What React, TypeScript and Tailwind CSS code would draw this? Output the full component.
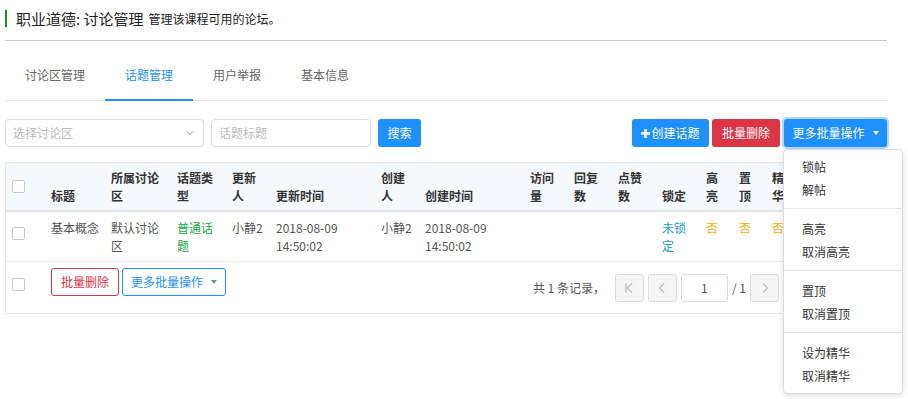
import React from "react";

const FONT = '"Noto Sans CJK SC", "Microsoft YaHei", sans-serif';

function Checkbox({ className = "" }: { className?: string }) {
  return <div className={"w-[13px] h-[13px] border border-[#c8c8c8] rounded-[2px] bg-white " + className} />;
}

function Caret({ color }: { color: string }) {
  return (
    <span
      className="inline-block w-0 h-0 ml-[8px] align-middle"
      style={{ borderLeft: "3.5px solid transparent", borderRight: "3.5px solid transparent", borderTop: `4px solid ${color}` }}
    />
  );
}

function PageBtn({ kind }: { kind: "first" | "prev" | "next" | "last" }) {
  return (
    <div className="w-[29px] h-[28px] border border-[#dcdcdc] rounded-[3px] bg-[#f5f5f5] flex items-center justify-center">
      <svg width="12" height="14" viewBox="0 0 12 14" fill="none" stroke="#bdbdbd" strokeWidth="1.2">
        {kind === "first" && (
          <>
            <path d="M3 2.5v9" />
            <path d="M9 2.5 4.2 7 9 11.5" />
          </>
        )}
        {kind === "prev" && <path d="M8 2.5 3.5 7 8 11.5" />}
        {kind === "next" && <path d="M4 2.5 8.5 7 4 11.5" />}
        {kind === "last" && (
          <>
            <path d="M3 2.5 7.8 7 3 11.5" />
            <path d="M9 2.5v9" />
          </>
        )}
      </svg>
    </div>
  );
}

function MenuItem({ children }: { children: React.ReactNode }) {
  return <div className="h-[23px] leading-[23px] pl-[18px]">{children}</div>;
}

function MenuDivider() {
  return <div className="mt-[7px] mb-[8px] h-px bg-[#e5e5e5]" />;
}

export default function App() {
  return (
    <div className="w-[908px] h-[399px] bg-white overflow-hidden text-[12px] text-[#333]" style={{ fontFamily: FONT }}>
      <div className="ml-[5px] w-[882px]">
        {/* header */}
        <div className="mt-[10px] flex items-center border-l-2 border-[#1e8c1e] pl-[9px] h-[17px]">
          <span className="text-[15px] leading-[17px] text-[#222]">职业道德: 讨论管理</span>
          <span className="ml-[5px] text-[12px] leading-[17px] text-[#222]">管理该课程可用的论坛。</span>
        </div>
        <div className="mt-[13px] h-px bg-[#cccccc]" />

        {/* tabs */}
        <div className="mt-[16px] flex border-b border-[#e8e8e8]">
          <div className="px-[20px] h-[43px] pt-[9px] leading-[18px] text-[#666]">讨论区管理</div>
          <div className="relative px-[20px] h-[43px] pt-[9px] leading-[18px] text-[#1e90ff]">
            话题管理
            <div className="absolute left-0 right-0 bottom-[-1px] h-[2px] bg-[#1e90ff]" />
          </div>
          <div className="px-[20px] h-[43px] pt-[9px] leading-[18px] text-[#666]">用户举报</div>
          <div className="px-[20px] h-[43px] pt-[9px] leading-[18px] text-[#666]">基本信息</div>
        </div>

        {/* filter row */}
        <div className="mt-[18px] flex justify-between h-[28px]">
          <div className="flex">
            <div className="w-[199px] h-[28px] border border-[#dcdcdc] rounded-[4px] flex items-center justify-between pl-[7px] pr-[9px]">
              <span className="text-[#bbb]">选择讨论区</span>
              <svg width="8" height="6" viewBox="0 0 8 6" fill="none" stroke="#888" strokeWidth="1">
                <path d="M1 1.5 4 4.5 7 1.5" />
              </svg>
            </div>
            <div className="ml-[7px] w-[160px] h-[28px] border border-[#dcdcdc] rounded-[4px] flex items-center pl-[7px]">
              <span className="text-[#bbb]">话题标题</span>
            </div>
            <div className="ml-[7px] w-[43px] h-[28px] rounded-[3px] bg-[#1e90ff] text-white flex items-center justify-center">搜索</div>
          </div>
          <div className="flex">
            <div className="w-[77px] h-[28px] rounded-[3px] bg-[#1e90ff] text-white flex items-center justify-center">
              <svg width="9" height="9" viewBox="0 0 9 9" className="mr-[1px]">
                <path d="M3.2 0h2.6v3.2H9v2.6H5.8V9H3.2V5.8H0V3.2h3.2z" fill="white" />
              </svg>
              创建话题
            </div>
            <div className="ml-[3px] w-[68px] h-[28px] rounded-[3px] bg-[#dc3545] text-white flex items-center justify-center">批量删除</div>
            <div className="relative ml-[4px]">
              <div className="w-[103px] h-[28px] rounded-[3px] bg-[#1e90ff] text-white flex items-center justify-center shadow-[0_0_0_2px_rgba(30,144,255,0.35)]">
                更多批量操作
                <Caret color="white" />
              </div>
              <div className="absolute left-[-1px] top-[30px] z-10 w-[120px] bg-white border border-[#dddddd] rounded-[4px] shadow-[0_2px_6px_rgba(0,0,0,0.12)] pt-[5px] pb-[6px] text-[#333]">
                <MenuItem>锁帖</MenuItem>
                <MenuItem>解帖</MenuItem>
                <MenuDivider />
                <MenuItem>高亮</MenuItem>
                <MenuItem>取消高亮</MenuItem>
                <MenuDivider />
                <MenuItem>置顶</MenuItem>
                <MenuItem>取消置顶</MenuItem>
                <MenuDivider />
                <MenuItem>设为精华</MenuItem>
                <MenuItem>取消精华</MenuItem>
              </div>
            </div>
          </div>
        </div>

        {/* table */}
        <div className="mt-[15px] border border-[#e6e6e6] leading-[18px]">
          {/* head */}
          <div className="flex bg-[#f6f9fc] h-[49px] border-b-2 border-[#e1e5e9] font-bold text-[#333]">
            <div className="w-[45px] shrink-0 pl-[6px] flex items-center"><Checkbox /></div>
            <div className="w-[60px] shrink-0 pr-[10px] flex items-end pb-[5px]">标题</div>
            <div className="w-[66px] shrink-0 pr-[10px] flex items-end pb-[5px]">所属讨论区</div>
            <div className="w-[55px] shrink-0 pr-[10px] flex items-end pb-[5px]">话题类型</div>
            <div className="w-[44px] shrink-0 pr-[10px] flex items-end pb-[5px]">更新人</div>
            <div className="w-[105px] shrink-0 pr-[10px] flex items-end pb-[5px]">更新时间</div>
            <div className="w-[44px] shrink-0 pr-[10px] flex items-end pb-[5px]">创建人</div>
            <div className="w-[105px] shrink-0 pr-[10px] flex items-end pb-[5px]">创建时间</div>
            <div className="w-[44px] shrink-0 pr-[10px] flex items-end pb-[5px]">访问量</div>
            <div className="w-[44px] shrink-0 pr-[10px] flex items-end pb-[5px]">回复数</div>
            <div className="w-[44px] shrink-0 pr-[10px] flex items-end pb-[5px]">点赞数</div>
            <div className="w-[44px] shrink-0 pr-[10px] flex items-end pb-[5px]">锁定</div>
            <div className="w-[33px] shrink-0 pr-[10px] flex items-end pb-[5px]">高亮</div>
            <div className="w-[33px] shrink-0 pr-[10px] flex items-end pb-[5px]">置顶</div>
            <div className="w-[33px] shrink-0 pr-[10px] flex items-end pb-[5px]">精华</div>
            <div className="flex-1" />
          </div>
          {/* row */}
          <div className="flex h-[50px] pt-[7px] border-b border-[#e9ecef] text-[#555]">
            <div className="w-[45px] shrink-0 pl-[6px]"><Checkbox className="mt-[8px]" /></div>
            <div className="w-[60px] shrink-0 pr-[10px]">基本概念</div>
            <div className="w-[66px] shrink-0 pr-[10px]">默认讨论区</div>
            <div className="w-[55px] shrink-0 pr-[10px] text-[#28a745]">普通话题</div>
            <div className="w-[44px] shrink-0 pr-[6px]">小静2</div>
            <div className="w-[105px] shrink-0 pr-[10px]">2018-08-09 14:50:02</div>
            <div className="w-[44px] shrink-0 pr-[6px]">小静2</div>
            <div className="w-[105px] shrink-0 pr-[10px]">2018-08-09 14:50:02</div>
            <div className="w-[44px] shrink-0 pr-[10px]" />
            <div className="w-[44px] shrink-0 pr-[10px]" />
            <div className="w-[44px] shrink-0 pr-[10px]" />
            <div className="w-[44px] shrink-0 pr-[10px] text-[#17a2b8]">未锁定</div>
            <div className="w-[33px] shrink-0 pr-[10px] text-[#f5b400]">否</div>
            <div className="w-[33px] shrink-0 pr-[10px] text-[#f5b400]">否</div>
            <div className="w-[33px] shrink-0 pr-[10px] text-[#f5b400]">否</div>
            <div className="flex-1" />
          </div>
          {/* footer */}
          <div className="flex h-[51px]">
            <div className="w-[45px] shrink-0 pl-[6px] pt-[16px]"><Checkbox /></div>
            <div className="pt-[6px] flex items-start">
              <div className="w-[68px] h-[28px] border border-[#dc3545] rounded-[3px] text-[#dc3545] flex items-center justify-center">批量删除</div>
              <div className="ml-[3px] w-[104px] h-[28px] border border-[#1e90ff] rounded-[3px] text-[#1e90ff] flex items-center justify-center">
                更多批量操作
                <Caret color="#6b8fb3" />
              </div>
            </div>
            <div className="ml-auto pt-[12px] flex items-start pr-[74px]">
              <span className="h-[28px] leading-[28px] text-[#555] mr-[10px]">共 1 条记录，</span>
              <PageBtn kind="first" />
              <div className="ml-[4px]"><PageBtn kind="prev" /></div>
              <div className="ml-[4px] w-[47px] h-[28px] border border-[#dcdcdc] rounded-[3px] bg-white flex items-center justify-center text-[#555]">1</div>
              <span className="mx-[4px] h-[28px] leading-[28px] text-[#555]">/ 1</span>
              <PageBtn kind="next" />
              <div className="ml-[4px]"><PageBtn kind="last" /></div>
            </div>
          </div>
        </div>
      </div>
    </div>
  );
}
